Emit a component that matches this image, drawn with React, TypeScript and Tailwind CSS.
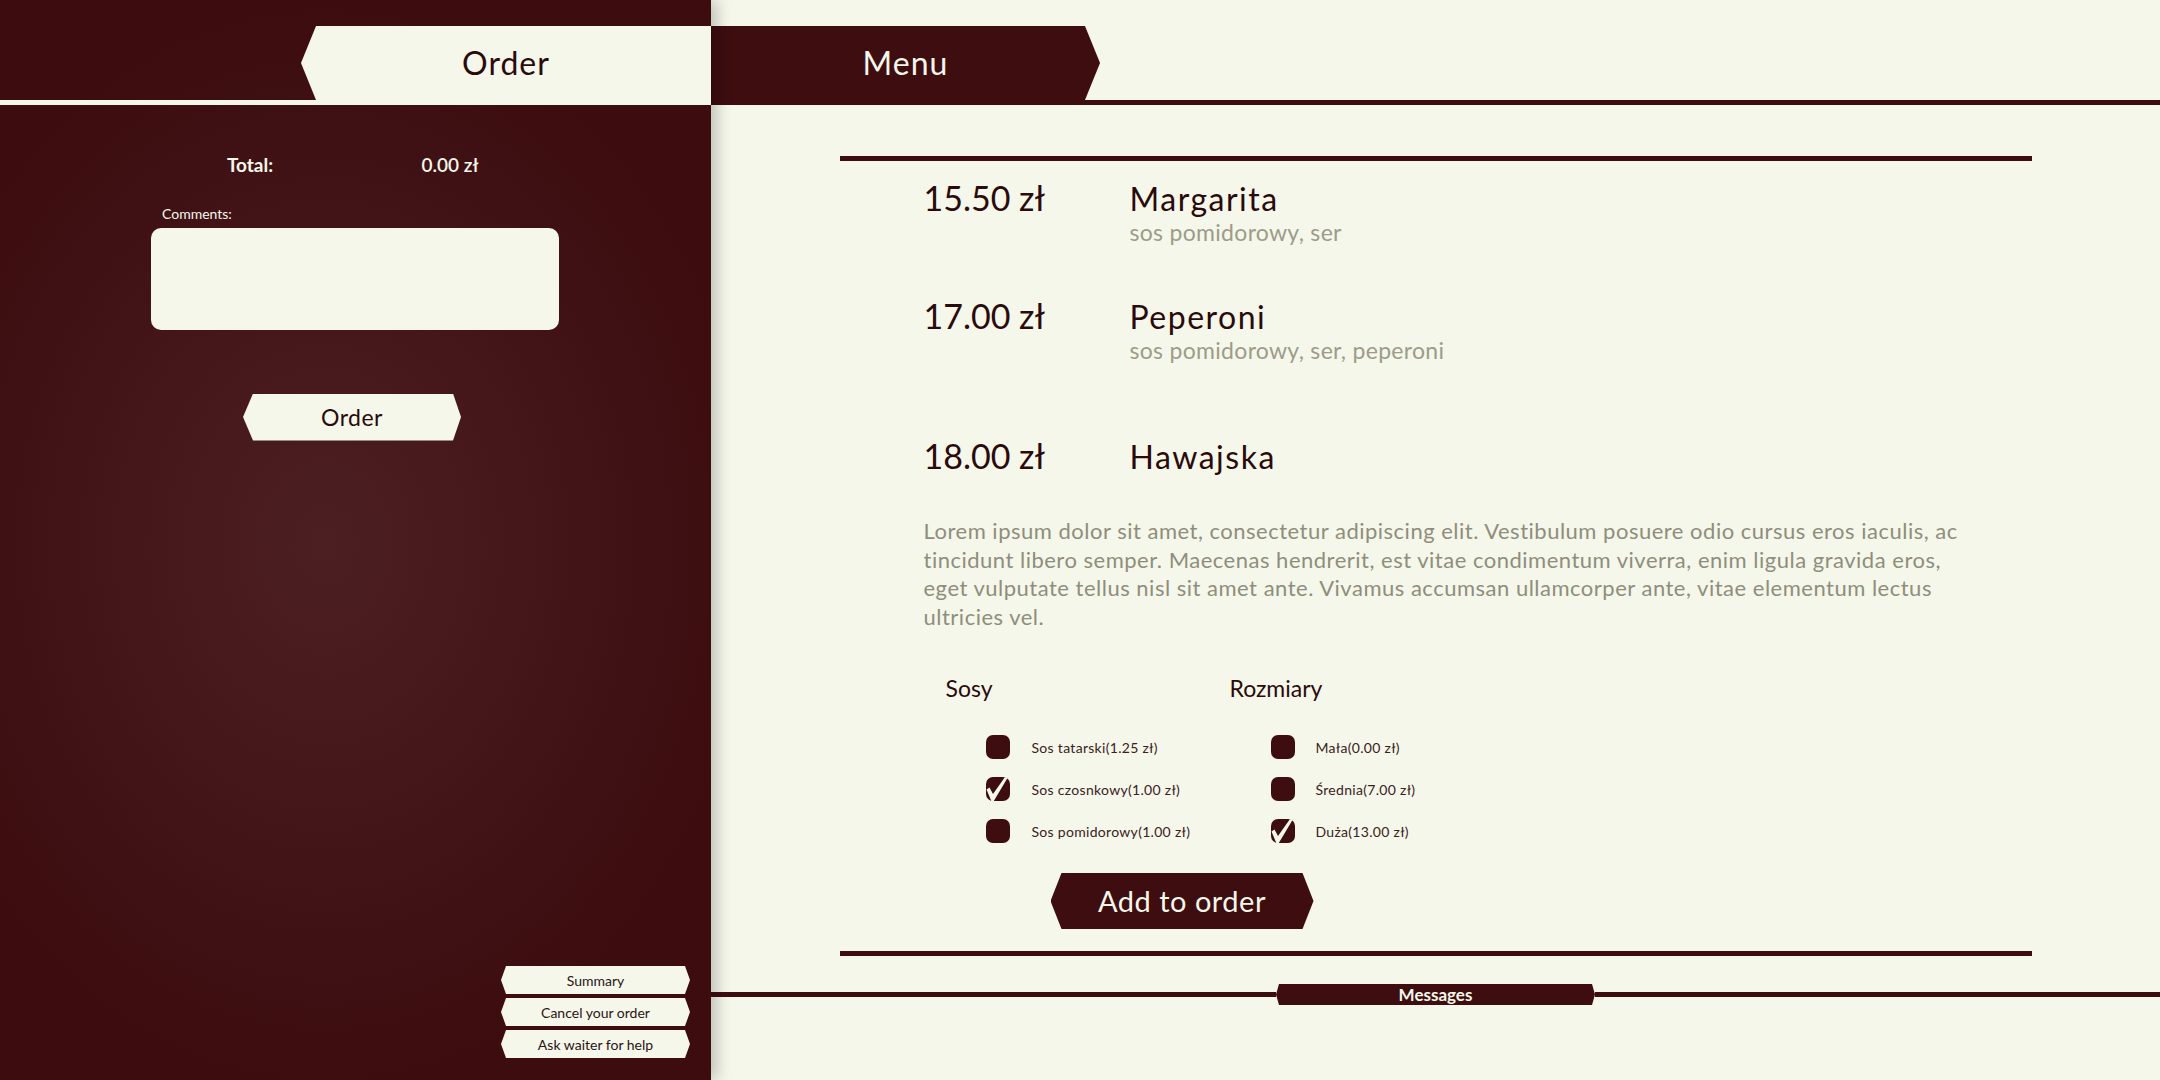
import React from "react";

const Check = () => (
  <svg
    viewBox="0 0 24 24"
    className="absolute left-0 top-0 h-[24px] w-[24px] overflow-visible"
  >
    <path d="M0.5 12.5 L3.5 10.5 L7 17 L19 0 L21.5 1 L7.5 24.5 L5.5 24.5 Z" fill="#f4f7ea" />
  </svg>
);

const Box = ({ checked, label, gap }: { checked?: boolean; label: string; gap: string }) => (
  <div className={`flex h-[24px] items-center ${gap}`}>
    <div className="relative h-[24px] w-[24px] shrink-0 rounded-[7px] bg-[#3d0d10]">
      {checked && <Check />}
    </div>
    <span className="text-[14px] tracking-[0.3px] text-[#3b2222]">{label}</span>
  </div>
);

const MenuRow = ({ price, name, desc, className }: { price: string; name: string; desc?: string; className?: string }) => (
  <div className={`grid grid-cols-[206px_1fr] items-baseline ${className ?? ""}`}>
    <span className="text-[34px] leading-[40px] text-[#2b0a0c]">{price}</span>
    <div>
      <div className="text-[32px] leading-[34px] tracking-[1.5px] text-[#2b0a0c]">{name}</div>
      {desc && <div className="mt-[4px] text-[23px] leading-[24px] tracking-[0.3px] text-[#9d9c89]">{desc}</div>}
    </div>
  </div>
);

const SideBtn = ({ children }: { children: React.ReactNode }) => (
  <button className="flex h-[28px] w-[189px] items-center justify-center bg-[#f4f7ea] text-[14px] text-[#2b1414] [clip-path:polygon(5px_0,calc(100%_-_5px)_0,100%_50%,calc(100%_-_5px)_100%,5px_100%,0_50%)]">
    {children}
  </button>
);

export default function App() {
  return (
    <div className="flex h-[1080px] w-[2160px] overflow-hidden bg-[#f4f7ea] font-[Lato,sans-serif]">
      <aside className="relative z-10 flex w-[711px] shrink-0 flex-col bg-[radial-gradient(ellipse_430px_540px_at_325px_545px,#4c1f22_0%,#45171a_45%,#3c0c0f_100%)] shadow-[6px_0_14px_rgba(0,0,0,0.22)]">
        <header className="flex h-[105px] flex-col justify-end">
          <div className="flex justify-end">
            <div className="flex h-[74px] w-[410px] items-center justify-center bg-[#f4f7ea] text-[32px] tracking-[1px] text-[#2b0a0c] [clip-path:polygon(15px_0,100%_0,100%_100%,15px_100%,0_50%)]">
              Order
            </div>
          </div>
          <div className="h-[5px] bg-[#f4f7ea]" />
        </header>

        <div className="ml-[150px] mt-[46px] grid w-[400px] grid-cols-2 text-center text-[19px] text-[#f4f7ea]">
          <span className="font-bold">Total:</span>
          <span className="font-semibold">0.00 zł</span>
        </div>

        <label className="ml-[162px] mt-[23px] text-[14px] text-[#f4f7ea]">Comments:</label>
        <textarea className="ml-[151px] mt-[4px] h-[102px] w-[408px] resize-none rounded-[10px] bg-[#f4f7ea] outline-none" />

        <button className="ml-[243px] mt-[64px] flex h-[47px] w-[218px] items-center justify-center bg-[#f4f7ea] text-[23px] tracking-[0.5px] text-[#2b0a0c] [clip-path:polygon(10px_0,calc(100%_-_8px)_0,100%_50%,calc(100%_-_8px)_100%,10px_100%,0_50%)]">
          Order
        </button>

        <div className="mb-[22px] mr-[21px] mt-auto flex flex-col gap-[4px] self-end">
          <SideBtn>Summary</SideBtn>
          <SideBtn>Cancel your order</SideBtn>
          <SideBtn>Ask waiter for help</SideBtn>
        </div>
      </aside>

      <main className="flex min-w-0 flex-1 flex-col">
        <header className="flex h-[105px] flex-col justify-end">
          <div className="flex h-[74px] w-[389px] items-center justify-center bg-[#3d0d10] text-[32px] tracking-[1px] text-[#f4f7ea] [clip-path:polygon(0_0,calc(100%_-_15px)_0,100%_50%,calc(100%_-_15px)_100%,0_100%)]">
            Menu
          </div>
          <div className="h-[5px] bg-[#3d0d10]" />
        </header>

        <section className="mx-auto mt-[51px] flex h-[800px] w-[1192px] flex-col border-y-[5px] border-[#3d0d10] pl-[84px] pr-[70px] pt-[17px]">
          <MenuRow price="15.50 zł" name="Margarita" desc="sos pomidorowy, ser" />
          <MenuRow className="mt-[52px]" price="17.00 zł" name="Peperoni" desc="sos pomidorowy, ser, peperoni" />
          <MenuRow className="mt-[74px]" price="18.00 zł" name="Hawajska" />

          <p className="mt-[41px] whitespace-nowrap text-[22px] leading-[28.5px] tracking-[0.5px] text-[#8f8e7c]">
            Lorem ipsum dolor sit amet, consectetur adipiscing elit. Vestibulum posuere odio cursus eros iaculis, ac
            <br />
            tincidunt libero semper. Maecenas hendrerit, est vitae condimentum viverra, enim ligula gravida eros,
            <br />
            eget vulputate tellus nisl sit amet ante. Vivamus accumsan ullamcorper ante, vitae elementum lectus
            <br />
            ultricies vel.
          </p>

          <div className="ml-[22px] mt-[43px] flex">
            <div className="w-[284px]">
              <h3 className="text-[23px] leading-[28px] text-[#2b0a0c]">Sosy</h3>
              <div className="ml-[40px] mt-[33px] flex flex-col gap-[18px]">
                <Box gap="gap-[22px]" label="Sos tatarski(1.25 zł)" />
                <Box gap="gap-[22px]" checked label="Sos czosnkowy(1.00 zł)" />
                <Box gap="gap-[22px]" label="Sos pomidorowy(1.00 zł)" />
              </div>
            </div>
            <div>
              <h3 className="text-[23px] leading-[28px] text-[#2b0a0c]">Rozmiary</h3>
              <div className="ml-[41px] mt-[33px] flex flex-col gap-[18px]">
                <Box gap="gap-[21px]" label="Mała(0.00 zł)" />
                <Box gap="gap-[21px]" label="Średnia(7.00 zł)" />
                <Box gap="gap-[21px]" checked label="Duża(13.00 zł)" />
              </div>
            </div>
          </div>

          <button className="ml-[127px] mt-[30px] flex h-[56px] w-[263px] items-center justify-center bg-[#3d0d10] text-[29px] tracking-[0.5px] text-[#f4f7ea] [clip-path:polygon(11px_0,calc(100%_-_11px)_0,100%_50%,calc(100%_-_11px)_100%,11px_100%,0_50%)]">
            Add to order
          </button>
        </section>

        <div className="mt-[28px] flex h-[21px] items-center">
          <div className="h-[5px] flex-1 bg-[#3d0d10]" />
          <div className="flex h-[21px] w-[319px] items-center justify-center bg-[#3d0d10] text-[17px] font-bold text-[#f4f7ea] [clip-path:polygon(3px_0,calc(100%_-_3px)_0,100%_50%,calc(100%_-_3px)_100%,3px_100%,0_50%)]">
            Messages
          </div>
          <div className="h-[5px] flex-1 bg-[#3d0d10]" />
        </div>
      </main>
    </div>
  );
}
